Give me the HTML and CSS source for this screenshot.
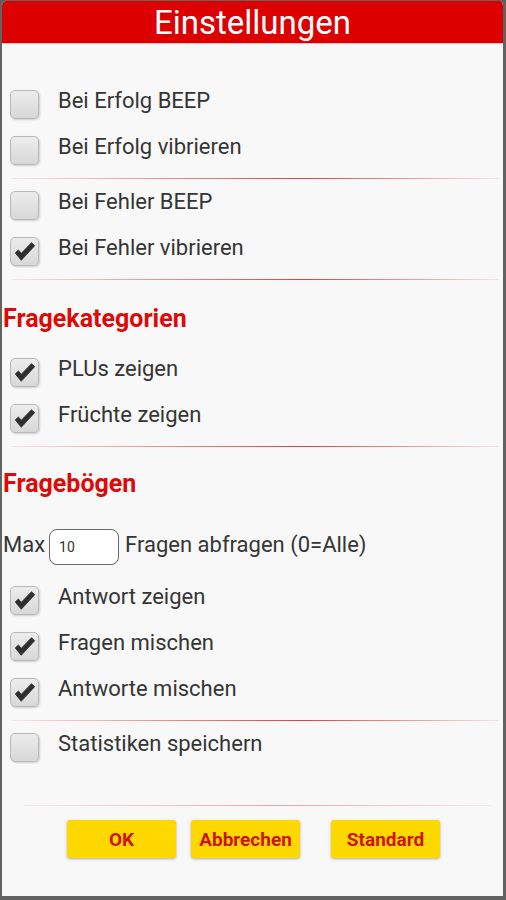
FILE: index.html
```html
<!DOCTYPE html>
<html lang="de">
<head>
<meta charset="utf-8">
<title>Einstellungen</title>
<link rel="stylesheet" href="styles.css">
</head>
<body>
<div class="frame">
  <header class="title-bar">Einstellungen</header>
  <main class="content">
    <div class="row first">
      <span class="box"></span><span class="label">Bei Erfolg BEEP</span>
    </div>
    <div class="row">
      <span class="box"></span><span class="label">Bei Erfolg vibrieren</span>
    </div>
    <div class="sep"></div>
    <div class="row">
      <span class="box"></span><span class="label">Bei Fehler BEEP</span>
    </div>
    <div class="row">
      <span class="box checked"><svg viewBox="0 0 29 29"><path d="M4.5 16 L8 12.8 L11 16.5 L22 5 L25.5 8.2 L11 24 Z"/></svg></span><span class="label">Bei Fehler vibrieren</span>
    </div>
    <div class="sep"></div>
    <h2 class="heading">Fragekategorien</h2>
    <div class="row">
      <span class="box checked"><svg viewBox="0 0 29 29"><path d="M4.5 16 L8 12.8 L11 16.5 L22 5 L25.5 8.2 L11 24 Z"/></svg></span><span class="label">PLUs zeigen</span>
    </div>
    <div class="row">
      <span class="box checked"><svg viewBox="0 0 29 29"><path d="M4.5 16 L8 12.8 L11 16.5 L22 5 L25.5 8.2 L11 24 Z"/></svg></span><span class="label">Früchte zeigen</span>
    </div>
    <div class="sep"></div>
    <h2 class="heading second">Fragebögen</h2>
    <div class="max-row">
      <span class="max-label">Max</span>
      <span class="num-input">10</span>
      <span class="max-text">Fragen abfragen (0=Alle)</span>
    </div>
    <div class="row">
      <span class="box checked"><svg viewBox="0 0 29 29"><path d="M4.5 16 L8 12.8 L11 16.5 L22 5 L25.5 8.2 L11 24 Z"/></svg></span><span class="label">Antwort zeigen</span>
    </div>
    <div class="row">
      <span class="box checked"><svg viewBox="0 0 29 29"><path d="M4.5 16 L8 12.8 L11 16.5 L22 5 L25.5 8.2 L11 24 Z"/></svg></span><span class="label">Fragen mischen</span>
    </div>
    <div class="row">
      <span class="box checked"><svg viewBox="0 0 29 29"><path d="M4.5 16 L8 12.8 L11 16.5 L22 5 L25.5 8.2 L11 24 Z"/></svg></span><span class="label">Antworte mischen</span>
    </div>
    <div class="sep"></div>
    <div class="row">
      <span class="box"></span><span class="label">Statistiken speichern</span>
    </div>
    <div class="sep bottom"></div>
    <div class="buttons">
      <span class="btn">OK</span>
      <span class="btn">Abbrechen</span>
      <span class="btn wide-gap">Standard</span>
    </div>
  </main>
</div>
</body>
</html>
```

FILE: styles.css
```css
* { box-sizing: border-box; }
html, body {
  margin: 0;
  padding: 0;
  background: #5c5c5c;
}
body {
  font-family: Roboto, "Liberation Sans", sans-serif;
}
.frame {
  width: 506px;
  height: 900px;
  border-style: solid;
  border-color: #626262;
  border-width: 1px 3px 4px 2px;
  border-radius: 6px 6px 0 0;
  background: #f8f8f8;
  overflow: hidden;
}
.title-bar {
  height: 43px;
  background: #dd0000;
  color: #ffffff;
  font-size: 33px;
  line-height: 43px;
  text-align: center;
  border-bottom: 1px solid #f2c0c0;
}
.content {
  display: flex;
  flex-direction: column;
  padding-top: 37px;
}
.row {
  flex: none;
  height: 46px;
  display: flex;
  align-items: center;
  padding-left: 8px;
}
.box {
  width: 29px;
  height: 29px;
  flex: none;
  border: 1px solid #b9b9b9;
  border-radius: 5px;
  background: linear-gradient(#ececec, #d8d8d8);
  box-shadow: 1px 1px 2px rgba(0,0,0,0.18);
  display: flex;
}
.box svg {
  width: 27px;
  height: 27px;
}
.box svg path {
  fill: #2e2e2e;
  stroke: #2e2e2e;
  stroke-width: 0.8;
  stroke-linejoin: round;
}
.label {
  margin-left: 19px;
  font-size: 22px;
  color: #353535;
  margin-bottom: 7px;
}
.sep {
  flex: none;
  height: 1px;
  margin: 5px 4px 3px 10px;
  background: linear-gradient(to right, rgba(221,0,0,0.08), rgba(221,0,0,0.75) 60%, rgba(221,0,0,0.08));
}
.sep.bottom {
  margin: 35px 12px 14px 22px;
  background: linear-gradient(to right, rgba(221,0,0,0.06), rgba(221,0,0,0.35) 55%, rgba(221,0,0,0.06));
}
.heading {
  flex: none;
  margin: 21px 0 15px 1px;
  height: 30px;
  line-height: 30px;
  font-size: 25px;
  font-weight: bold;
  color: #dd0a0a;
}
.heading.second {
  margin-top: 19px;
  margin-bottom: 23px;
}
.max-row {
  flex: none;
  height: 50px;
  margin-bottom: 5px;
  display: flex;
  align-items: center;
  padding-left: 1px;
  font-size: 22px;
  color: #353535;
}
.max-label {
  margin-bottom: 5px;
}
.num-input {
  width: 70px;
  height: 36px;
  margin-left: 4px;
  margin-right: 6px;
  border: 1px solid #6a6a6a;
  border-radius: 8px;
  background: #ffffff;
  font-size: 14px;
  color: #333;
  padding-left: 9px;
  line-height: 34px;
}
.max-text {
  margin-bottom: 5px;
}
.buttons {
  flex: none;
  display: flex;
  padding-left: 65px;
  gap: 15px;
}
.btn {
  width: 109px;
  height: 38px;
  background: #ffd800;
  border-radius: 3px;
  box-shadow: 0 1px 3px rgba(0,0,0,0.3);
  color: #cc1500;
  font-weight: bold;
  font-size: 19px;
  display: flex;
  align-items: center;
  justify-content: center;
}
.btn.wide-gap {
  margin-left: 16px;
}
```
